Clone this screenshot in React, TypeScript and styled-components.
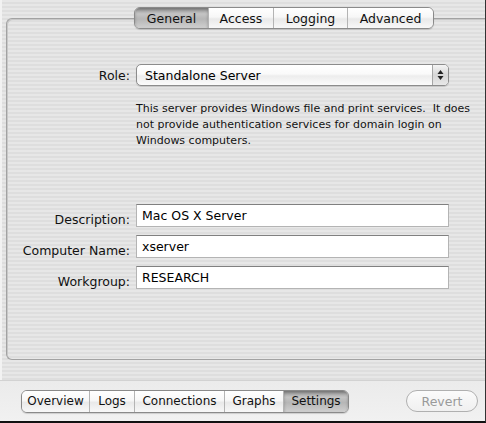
import React, { FC } from 'react';
import styled, { createGlobalStyle, css } from 'styled-components';

const GlobalStyle = createGlobalStyle`
  html, body {
    margin: 0;
    padding: 0;
    background: #000;
  }
  * {
    box-sizing: border-box;
  }
`

const stripes = css`
  background: repeating-linear-gradient(
    to bottom,
    #e7e7e7 0px,
    #e7e7e7 2px,
    #dedede 2px,
    #dedede 4px
  );
`

const Window = styled.div`
  width: 486px;
  height: 423px;
  display: flex;
  flex-direction: column;
  border-bottom: 2px solid #111;
  border-right: 1px solid #333;
  font-family: "DejaVu Sans", "Liberation Sans", sans-serif;
  color: #000;
  overflow: hidden;
  ${stripes};
`

const Main = styled.div`
  flex: 0 0 380px;
  padding: 7px 0 0 4px;
  border-left: 2px solid #f2f2f2;
  display: flex;
  flex-direction: column;
`

const TabRow = styled.div`
  position: relative;
  z-index: 1;
  display: flex;
  padding-left: 128px;
`

const Segmented = styled.div<{ $height: number }>`
  display: flex;
  height: ${p => p.$height}px;
  border: 1px solid #8a8a8a;
  border-radius: 6px;
  overflow: hidden;
  box-shadow: 0 1px 1px rgba(0, 0, 0, 0.15);
`

const Segment = styled.div<{ $width: number; $active?: boolean; $size: number }>`
  width: ${p => p.$width}px;
  display: flex;
  align-items: center;
  justify-content: center;
  font-size: ${p => p.$size}px;
  color: #111;
  background: ${p => p.$active
    ? 'linear-gradient(to bottom, #9c9c9c 0%, #c4c4c4 30%, #b6b6b6 55%, #cfcfcf 100%)'
    : 'linear-gradient(to bottom, #ffffff 0%, #f7f7f7 45%, #e9e9e9 55%, #f8f8f8 100%)'};
  box-shadow: ${p => p.$active ? 'inset 0 2px 3px rgba(0,0,0,0.25)' : 'none'};
  & + & {
    border-left: 1px solid #b4b4b4;
  }
`

const GroupBox = styled.div`
  margin-top: -11px;
  height: 342px;
  border: 1px solid #a2a2a2;
  border-right: none;
  border-radius: 6px 0 0 6px;
  box-shadow: inset 1px 1px 0 #c8c8c8;
  padding: 45px 0 0 0;
  ${stripes};
  background-position: 0 -1px;
`

const Form = styled.div`
  display: grid;
  grid-template-columns: 123px 313px;
  column-gap: 6px;
  align-items: center;
`

const Label = styled.div`
  text-align: right;
  font-size: 12.5px;
  color: #111;
`

const Popup = styled.div`
  height: 22px;
  display: flex;
  align-items: stretch;
  border: 1px solid #8c8c8c;
  border-radius: 5px;
  background: linear-gradient(to bottom, #ffffff 0%, #fafafa 45%, #ededed 55%, #fbfbfb 100%);
  box-shadow: 0 1px 1px rgba(0, 0, 0, 0.15);
  overflow: hidden;
`

const PopupText = styled.div`
  flex: 1;
  display: flex;
  align-items: center;
  padding-left: 8px;
  font-size: 12.5px;
`

const PopupArrows = styled.div`
  width: 16px;
  display: flex;
  align-items: center;
  justify-content: center;
  border-left: 1px solid #a6a6a6;
  background: linear-gradient(to bottom, #f4f4f4 0%, #d6d6d6 50%, #e8e8e8 100%);
`

const Help = styled.div`
  grid-column: 2;
  margin: 15px -20px 0 0;
  font-size: 11px;
  line-height: 16px;
  color: #111;
  white-space: pre;
`

const Spacer = styled.div<{ $h: number }>`
  grid-column: 1 / span 2;
  height: ${p => p.$h}px;
`

const Field = styled.div`
  height: 23px;
  display: flex;
  align-items: center;
  padding-left: 5px;
  background: #fff;
  border: 1px solid #b4b4b4;
  border-top-color: #808080;
  font-size: 12.5px;
  margin-bottom: 8px;
`

const BottomBar = styled.div`
  flex: 1;
  display: flex;
  align-items: center;
  justify-content: space-between;
  padding: 0 7px 0 21px;
  background: linear-gradient(to bottom, #ebebeb, #f1f1f1);
  border-top: 1px solid #d2d2d2;
`

const RevertButton = styled.div`
  width: 72px;
  height: 22px;
  border: 1px solid #b0b0b0;
  border-radius: 11px;
  display: flex;
  align-items: center;
  justify-content: center;
  font-size: 12.5px;
  color: #9a9a9a;
  background: linear-gradient(to bottom, #fbfbfb, #f0f0f0);
`

const topTabs = [
    {label: 'General', width: 73, active: true},
    {label: 'Access', width: 65},
    {label: 'Logging', width: 74},
    {label: 'Advanced', width: 86},
]

const bottomTabs = [
    {label: 'Overview', width: 67},
    {label: 'Logs', width: 45},
    {label: 'Connections', width: 90},
    {label: 'Graphs', width: 59},
    {label: 'Settings', width: 65, active: true},
]

const fields = [
    {label: 'Description:', value: 'Mac OS X Server'},
    {label: 'Computer Name:', value: 'xserver'},
    {label: 'Workgroup:', value: 'RESEARCH'},
]

const Arrows: FC = () => (
    <svg width="7" height="12" viewBox="0 0 7 12">
        <path d="M3.5 1 L6.5 5 L0.5 5 Z" fill="#222"/>
        <path d="M3.5 11 L6.5 7 L0.5 7 Z" fill="#222"/>
    </svg>
)

const App: FC = () => {
    return (
        <>
            <GlobalStyle/>
            <Window>
                <Main>
                    <TabRow>
                        <Segmented $height={22}>
                            {topTabs.map(t => (
                                <Segment key={t.label} $width={t.width} $active={t.active} $size={12.5}>
                                    {t.label}
                                </Segment>
                            ))}
                        </Segmented>
                    </TabRow>
                    <GroupBox>
                        <Form>
                            <Label>Role:</Label>
                            <Popup>
                                <PopupText>Standalone Server</PopupText>
                                <PopupArrows><Arrows/></PopupArrows>
                            </Popup>
                            <Help>{'This server provides Windows file and print services.  It does\nnot provide authentication services for domain login on\nWindows computers.'}</Help>
                            <Spacer $h={55}/>
                            {fields.map(f => (
                                <React.Fragment key={f.label}>
                                    <Label>{f.label}</Label>
                                    <Field>{f.value}</Field>
                                </React.Fragment>
                            ))}
                        </Form>
                    </GroupBox>
                </Main>
                <BottomBar>
                    <Segmented $height={23}>
                        {bottomTabs.map(t => (
                            <Segment key={t.label} $width={t.width} $active={t.active} $size={12}>
                                {t.label}
                            </Segment>
                        ))}
                    </Segmented>
                    <RevertButton>Revert</RevertButton>
                </BottomBar>
            </Window>
        </>
    );
};

export default App;
